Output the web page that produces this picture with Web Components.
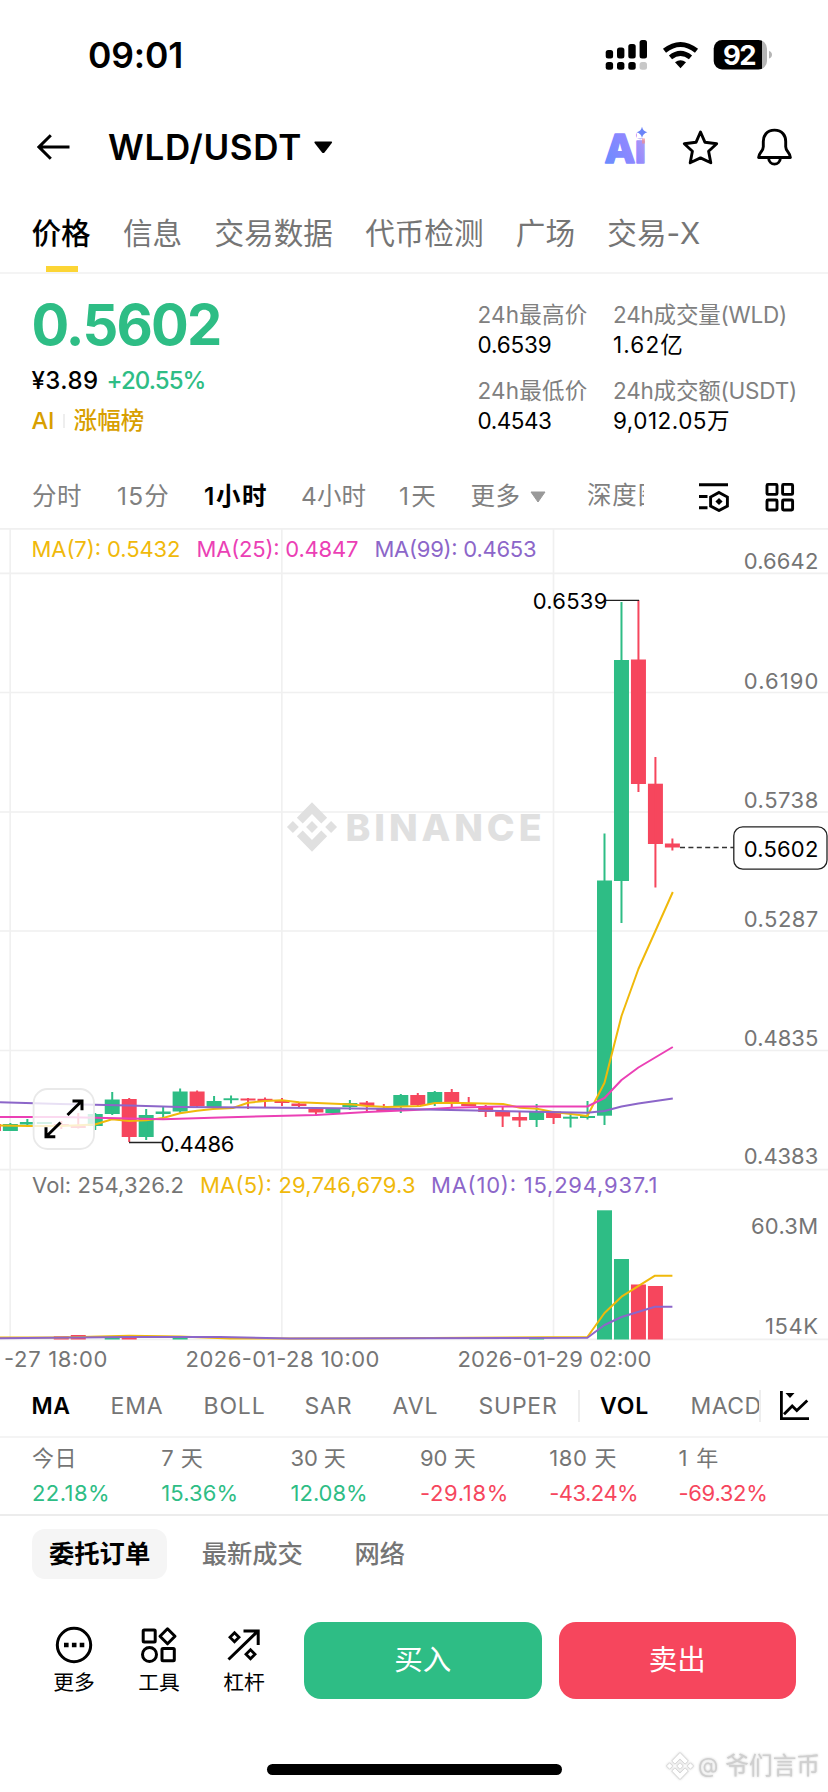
<!DOCTYPE html>
<html lang="zh">
<head>
<meta charset="utf-8">
<title>WLD/USDT</title>
<style>
  body {
    margin: 0;
    background: #fff;
    color: #000;
    font-family: Inter, "Noto Sans CJK SC", sans-serif;
  }
</style>
</head>
<body>
<trade-page></trade-page>

<script>
const GREEN = '#2ebd85';
const RED = '#f6465d';

// Text that is tracked to fill the width given in its w attribute
class FitText extends HTMLElement {
  connectedCallback() {
    this.attachShadow({ mode: 'open' });
    this.shadowRoot.innerHTML = `
      <style>
        :host { display: block; white-space: nowrap; }
        span { display: inline-block; }
      </style>
      <span><slot></slot></span>
    `;
    const w = parseFloat(this.getAttribute('w'));
    if (!w) return;
    const span = this.shadowRoot.querySelector('span');
    const natural = span.getBoundingClientRect().width;
    span.style.letterSpacing = (w - natural) / this.textContent.length + 'px';
    this.style.width = w + 'px';
  }
}

class StatusBar extends HTMLElement {
  connectedCallback() {
    this.attachShadow({ mode: 'open' });
    this.shadowRoot.innerHTML = `
      <style>
        :host {
          display: flex;
          align-items: center;
          justify-content: space-between;
          height: 110px;
          padding: 0 56px 0 88px;
          box-sizing: border-box;
        }
        fit-text { font-size: 35.5px; font-weight: 600; }
        svg { display: block; }
      </style>
      <fit-text w="95">09:01</fit-text>
      <svg width="167" height="32" viewBox="605 39 167 32">
        <g>
          <rect x="605.7" y="50" width="7.4" height="8.4" rx="2.5"/>
          <rect x="617" y="47.5" width="7.4" height="10.9" rx="2.5"/>
          <rect x="628.3" y="44" width="7.4" height="14.4" rx="2.5"/>
          <rect x="639.6" y="40" width="7.4" height="18.4" rx="2.5"/>
          <rect x="605.7" y="62" width="7.4" height="7.8" rx="2.5"/>
          <rect x="617" y="62" width="7.4" height="7.8" rx="2.5"/>
          <rect x="628.3" y="62" width="7.4" height="7.8" rx="2.5"/>
          <rect x="639.6" y="62" width="7.4" height="7.8" rx="2.5" fill="#c8c8c8"/>
        </g>
        <g fill="none" stroke="#000" stroke-width="5">
          <path d="M664.5 50.8 Q680.5 38.2 696.5 50.8"/>
          <path d="M670.5 57.4 Q680.5 49.4 690.5 57.4"/>
        </g>
        <path d="M675 62.3 Q680.5 58 686 62.3 L680.5 68.2 Z"/>
        <clipPath id="b"><rect x="713.7" y="40" width="53.3" height="29.6" rx="8.5"/></clipPath>
        <g clip-path="url(#b)">
          <rect x="713" y="39" width="49.3" height="32"/>
          <rect x="762.3" y="39" width="6" height="32" fill="#b5b5b5"/>
        </g>
        <path d="M769 51 Q772 52 772 54.8 T769 58.6 Z" fill="#b5b5b5"/>
        <text x="723" y="64.9" font-size="27.5" font-weight="700" fill="#fff" textLength="33.5">92</text>
      </svg>
    `;
  }
}

class PairHeader extends HTMLElement {
  connectedCallback() {
    this.attachShadow({ mode: 'open' });
    this.shadowRoot.innerHTML = `
      <style>
        :host {
          display: grid;
          grid-template-columns: 71px 205px 1fr auto;
          align-items: center;
          height: 73px;
          padding: 0 34px 0 37px;
        }
        fit-text { font-size: 35px; font-weight: 600; }
        svg { display: block; }
      </style>
      <svg width="33" height="28" fill="none" stroke="#000" stroke-width="3">
        <path d="M32.5 14 H2.5 M13.8 2.3 L2 14 L13.8 25.7"/>
      </svg>
      <fit-text w="194">${this.getAttribute('pair')}</fit-text>
      <svg width="20" height="14"><path d="M2 1.5 H18.5 Q19.6 1.8 18.8 3 L11.5 12.5 Q10.2 13.6 9 12.5 L1.6 3 Q1 1.8 2 1.5 Z"/></svg>
      <svg width="190" height="44" viewBox="604 124.5 190 44">
        <defs>
          <linearGradient id="g" gradientUnits="userSpaceOnUse" x1="605" y1="160" x2="648" y2="140">
            <stop offset="0" stop-color="#6b8cff"/>
            <stop offset=".6" stop-color="#9087ff"/>
            <stop offset="1" stop-color="#b49df2"/>
          </linearGradient>
          <clipPath id="c"><rect x="600" y="131" width="37" height="40"/><rect x="637" y="138" width="14" height="30"/></clipPath>
        </defs>
        <g clip-path="url(#c)">
          <text x="604.5" y="162.5" font-size="40" font-weight="800" fill="url(#g)" stroke="url(#g)" stroke-width="1.5" stroke-linejoin="round" textLength="41.5">Ai</text>
        </g>
        <path d="M642 126.2 Q643 130.8 647.4 131.8 Q643 132.8 642 137.4 Q641 132.8 636.6 131.8 Q641 130.8 642 126.2 Z" fill="#6a84f8"/>
        <rect x="642" y="138" width="3" height="5" fill="#f08b93" opacity=".7"/>
        <g fill="none" stroke="#000" stroke-width="2.9" stroke-linejoin="round">
          <path d="M700.5 131.5 L705 141.8 L716.7 143.2 L708.6 150.7 L710.8 162.3 L700.5 157.4 L690.2 162.3 L692.4 150.7 L684.3 143.2 L696 141.8 Z"/>
          <path d="M774.5 129.6 C766.5 129.6 763.3 135.5 763.3 141 V146.2 C763.3 151 758.6 152.4 758.6 157 H790.4 C790.4 152.4 785.7 151 785.7 146.2 V141 C785.7 135.5 782.5 129.6 774.5 129.6 Z"/>
          <path d="M768.6 157.5 C769 165.6 780 165.6 780.4 157.5"/>
        </g>
      </svg>
    `;
  }
}

class PageTabs extends HTMLElement {
  connectedCallback() {
    this.attachShadow({ mode: 'open' });
    this.shadowRoot.innerHTML = `
      <style>
        :host {
          display: flex;
          gap: 32.3px;
          height: 91px;
          padding: 31px 0 0 31.5px;
          box-sizing: border-box;
          border-bottom: 2px solid #f4f4f4;
          font-size: 29.6px;
          line-height: 38px;
          color: #757575;
        }
        ::slotted(*) { white-space: nowrap; }
        ::slotted(.active) {
          color: #000;
          font-weight: 500;
          height: 53px;
          background: linear-gradient(#fcd535, #fcd535) 14px 100% / 32px 6px no-repeat;
          padding-bottom: 5px;
        }
      </style>
      <slot></slot>
    `;
  }
}

class PriceSummary extends HTMLElement {
  connectedCallback() {
    this.attachShadow({ mode: 'open' });
    this.shadowRoot.innerHTML = `
      <style>
        :host {
          display: grid;
          grid-template-columns: 446px 135.5px 1fr;
          height: 192px;
          padding-left: 31.5px;
          font-size: 22.5px;
        }
        .price { font-size: 56px; font-weight: 700; line-height: 60px; margin-top: 21px; color: ${GREEN}; }
        .change { display: flex; gap: 8px; font-size: 24px; font-weight: 500; line-height: 40px; margin-top: 6px; }
        .up { color: ${GREEN}; }
        .tags { display: flex; align-items: center; color: #d89f00; line-height: 40px; font-size: 23.5px; font-weight: 500; }
        i { width: 2px; height: 14px; background: #eee; margin: 0 9px 0 8px; }
        .stats { display: grid; grid-template-rows: 30px 46px 30px 30px; line-height: 30px; padding-top: 26px; }
        .label { color: #808080; }
      </style>
      <div>
        <fit-text class="price" w="189">0.5602</fit-text>
        <div class="change">
          <fit-text w="67">¥3.89</fit-text>
          <fit-text class="up" w="99">+20.55%</fit-text>
        </div>
        <div class="tags"><fit-text w="23">AI</fit-text><i></i><fit-text w="71">涨幅榜</fit-text></div>
      </div>
      <div class="stats">
        <fit-text class="label" w="110">24h最高价</fit-text>
        <fit-text w="74">0.6539</fit-text>
        <fit-text class="label" w="110">24h最低价</fit-text>
        <fit-text w="74">0.4543</fit-text>
      </div>
      <div class="stats">
        <fit-text class="label" w="174">24h成交量(WLD)</fit-text>
        <fit-text w="71">1.62亿</fit-text>
        <fit-text class="label" w="184">24h成交额(USDT)</fit-text>
        <fit-text w="117">9,012.05万</fit-text>
      </div>
    `;
  }
}

class IntervalBar extends HTMLElement {
  connectedCallback() {
    this.attachShadow({ mode: 'open' });
    this.shadowRoot.innerHTML = `
      <style>
        :host {
          display: grid;
          grid-template-columns: 85px 87px 97px 98px 71.5px 59.5px 57px 57px 54px 67px 1fr;
          align-items: center;
          height: 62px;
          padding-left: 32px;
          font-size: 24.5px;
          line-height: 30px;
          color: #808080;
        }
        fit-text { margin-top: -2px; }
        .on { color: #000; font-weight: 600; }
        .cut { overflow: hidden; height: 34px; padding-top: 2px; box-sizing: border-box; }
        svg { display: block; }
      </style>
      <fit-text w="50">分时</fit-text>
      <fit-text w="53">15分</fit-text>
      <fit-text class="on" w="64">1小时</fit-text>
      <fit-text w="65">4小时</fit-text>
      <fit-text w="39">1天</fit-text>
      <fit-text w="50">更多</fit-text>
      <svg width="16" height="12"><path d="M1 1 H15 L8 11 Z" fill="#999" stroke="#999" stroke-linejoin="round"/></svg>
      <div class="cut"><fit-text w="76">深度图</fit-text></div>
      <i></i>
      <svg width="31" height="30" viewBox="698 482.5 31 30" fill="none" stroke="#000" stroke-width="2.9">
        <path d="M699 485.3 H728 M699 497 H707.5 M699 508.3 H707.5"/>
        <path d="M719 493 L727.4 497.6 V506.6 L719 511 L710.6 506.6 V497.6 Z"/>
        <path d="M719 498.6 L722.6 502.1 L719 505.6 L715.4 502.1 Z" fill="#000" stroke="none"/>
      </svg>
      <svg width="30" height="30" fill="none" stroke="#000" stroke-width="2.9">
        <rect x="2" y="2.4" width="10" height="10" rx="1"/>
        <rect x="17.6" y="2.4" width="10" height="10" rx="1"/>
        <rect x="2" y="18" width="10" height="10" rx="1"/>
        <rect x="17.6" y="18" width="10" height="10" rx="1"/>
      </svg>
    `;
  }
}

// newest first: [up, body top, body bottom, wick top, wick bottom] in chart y
const CANDLES = [
  [0, 843.5, 847.5, 838.5, 850.5], [0, 783.7, 844, 757, 887.5], [0, 659.5, 784, 600, 792],
  [1, 660, 881, 602, 923], [1, 880.5, 1115.7, 833.5, 1125], [1, 1116, 1118, 1101, 1119.5],
  [1, 1116.7, 1118.7, 1112, 1127.5], [0, 1111.5, 1118, 1111, 1124], [1, 1112, 1120, 1104, 1127],
  [0, 1117, 1120.5, 1112, 1127], [0, 1111.5, 1116.5, 1107, 1127], [0, 1106, 1112, 1105, 1117],
  [0, 1104, 1106, 1097, 1106], [0, 1092, 1103, 1089, 1108], [1, 1092, 1104, 1091, 1106],
  [0, 1095, 1105, 1093, 1106], [1, 1095, 1106, 1094, 1113], [0, 1109, 1112, 1104, 1112],
  [0, 1102.5, 1106, 1101, 1111], [1, 1103, 1107, 1100, 1110], [1, 1109, 1113, 1108, 1114.5],
  [0, 1109, 1112.5, 1107, 1116], [0, 1103.5, 1106, 1103, 1107.5], [0, 1100.5, 1103, 1098, 1106],
  [0, 1098.8, 1101, 1097.5, 1107], [0, 1098.5, 1100.5, 1098, 1109], [1, 1098.3, 1100.2, 1095.5, 1103.5],
  [1, 1101, 1107, 1096, 1107], [0, 1091.5, 1106, 1090.5, 1107], [1, 1091.5, 1111.5, 1088.5, 1113],
  [1, 1111.5, 1114, 1107, 1118], [1, 1115, 1137, 1109, 1140], [0, 1099, 1137, 1098, 1142],
  [1, 1099.5, 1114, 1092, 1115], [1, 1114, 1126, 1113, 1130], [0, 1126, 1128, 1113, 1128.5],
  [0, 1124, 1126, 1121, 1129], [1, 1122, 1124, 1122, 1124], [1, 1122, 1124.5, 1119, 1127],
  [1, 1124, 1131, 1123, 1131], [0, 1124, 1131, 1124, 1131]
];

// [candle index, top]
const VOLUMES = [[1, 1286], [2, 1284.5], [3, 1259], [4, 1210.3], [8, 1338], [29, 1337.5], [32, 1337], [33, 1337.5], [35, 1335], [36, 1336.3]];

const LINES = {
  ma7: ['#f0b90b', '0,1125.5 30,1126 61,1126 95,1124.5 112,1119.3 129,1121 146.5,1120.3 163,1118 180,1113.3 197,1110.7 213,1109 233,1108 248,1102.7 265,1101 282,1100.3 299,1102.3 353,1104.5 367,1106 387,1107 420,1106 435,1103 452,1102.7 503,1104 520,1107.7 537,1108.7 553,1112 571,1114 587.4,1116 604.5,1082.7 621.5,1016 638.4,969 655.4,931 672.8,892'],
  ma25: ['#eb40b5', '0,1117 61,1117 129,1118.5 163,1119.3 220,1117.5 316,1115 367,1112 414,1110 452,1107.7 500,1106.5 587.4,1106.5 604.5,1098 621.5,1080 638.4,1067.5 672.8,1047'],
  ma99: ['#8c66c9', '0,1102.3 60,1104 129,1105.5 180,1107 316,1108 414,1109.3 500,1111 587,1112.8 604.5,1111 621.5,1106.5 638.4,1103.5 672.8,1098.5'],
  vol5: ['#f0b90b', '0,1337.5 61,1337.5 129,1335.8 180,1336.5 230,1338.5 350,1338.5 587.4,1337 604.5,1313 621.5,1296.7 655,1275.7 672.4,1275.7'],
  vol10: ['#8c66c9', '0,1338.2 129,1337 220,1337 290,1338.5 587.4,1337.8 604.5,1325 621.5,1317 655,1306.7 672.4,1306.7']
};

class KlineChart extends HTMLElement {
  x(k) {
    return 672.4 - 16.975 * k;
  }

  // cy is the middle of the digits
  label(x, cy, w, color, text) {
    return `<text x="${x}" y="${cy + 7.8}" fill="${color}" textLength="${w}">${text}</text>`;
  }

  connectedCallback() {
    this.attachShadow({ mode: 'open' });

    const grid = [573.3, 692.5, 812, 931, 1050.5, 1169.7, 1339.3].map(y => `M0 ${y} H828`).join(' ')
      + [10.2, 281.8, 553.5].map(x => `M${x} 528 V1339`).join(' ');

    const candles = CANDLES.map(([up, top, bottom, high, low], k) => {
      const x = this.x(k);
      const color = up ? GREEN : RED;
      return `<rect x="${x - 7.5}" y="${top}" width="15" height="${bottom - top}" fill="${color}"/>
        <rect x="${x - 1}" y="${high}" width="2" height="${low - high}" fill="${color}"/>`;
    }).join('');

    const volumes = VOLUMES.map(([k, top]) =>
      `<rect x="${this.x(k) - 7.5}" y="${top}" width="15" height="${1339.5 - top}" fill="${CANDLES[k][0] ? GREEN : RED}"/>`
    ).join('');

    const lines = Object.values(LINES).map(([color, points]) =>
      `<polyline points="${points}" fill="none" stroke="${color}" stroke-width="2" stroke-linejoin="round"/>`
    ).join('');

    const axis = [['0.6642', 561], ['0.6190', 681], ['0.5738', 800], ['0.5287', 919], ['0.4835', 1038], ['0.4383', 1156]]
      .map(([t, y]) => this.label(743.8, y, 74.5, '#757575', t)).join('');

    this.shadowRoot.innerHTML = `
      <style>
        :host { display: block; height: 852px; }
        svg { display: block; font-size: 22px; }
      </style>
      <svg width="828" height="852" viewBox="0 528 828 852">
        <path d="${grid} M0 528.8 H828" stroke="#f0f0f0" stroke-width="1.7" fill="none"/>
        <g fill="#e0e0e0">
          <g transform="translate(312 827) scale(1.97)">
            <path d="M-7.7 -4.7 L0 -12.6 L7.7 -4.7 L4.7 -1.8 L0 -6.6 L-4.7 -1.8 Z"/>
            <path d="M-7.7 4.7 L0 12.6 L7.7 4.7 L4.7 1.8 L0 6.6 L-4.7 1.8 Z"/>
            <path d="M0 -3 L3 0 L0 3 L-3 0 Z M-9.7 -3 L-6.7 0 L-9.7 3 L-12.7 0 Z M9.7 -3 L12.7 0 L9.7 3 L6.7 0 Z"/>
          </g>
          <text x="345.5" y="840.8" font-size="37.5" font-weight="800" textLength="196">BINANCE</text>
        </g>
        ${candles}
        ${volumes}
        ${lines}
        ${axis}
        ${this.label(751, 1226, 67, '#757575', '60.3M')}
        ${this.label(765, 1326, 53, '#757575', '154K')}
        ${this.label(31.5, 549, 149, '#f0b90b', 'MA(7): 0.5432')}
        ${this.label(196.5, 549, 162, '#eb40b5', 'MA(25): 0.4847')}
        ${this.label(374.5, 549, 162, '#8c66c9', 'MA(99): 0.4653')}
        ${this.label(32, 1185.5, 152, '#757575', 'Vol: 254,326.2')}
        ${this.label(200, 1185.5, 215.5, '#f0b90b', 'MA(5): 29,746,679.3')}
        ${this.label(431, 1185.5, 226.5, '#8c66c9', 'MA(10): 15,294,937.1')}
        ${this.label(4, 1359.5, 103.5, '#757575', '-27 18:00')}
        ${this.label(185.5, 1359.5, 194, '#757575', '2026-01-28 10:00')}
        ${this.label(457.5, 1359.5, 194, '#757575', '2026-01-29 02:00')}
        <path d="M606 600.4 H639 M129 1142.5 H162" stroke="#222" stroke-width="1.4"/>
        ${this.label(532.8, 601, 74.5, '#000', '0.6539')}
        ${this.label(160.5, 1144, 74, '#000', '0.4486')}
        <path d="M680 847.6 H734" stroke="#333" stroke-width="1.5" stroke-dasharray="5 3.4"/>
        <rect x="733.8" y="826.8" width="93.2" height="42.4" rx="9" fill="#fff" stroke="#222" stroke-width="1.3"/>
        ${this.label(743.8, 848.7, 74.5, '#000', '0.5602')}
        <rect x="33.6" y="1089" width="60.4" height="60" rx="14" fill="#fff" fill-opacity=".8" stroke="#e9e9e9" stroke-width="1.8"/>
        <path d="M67.5 1115 L82 1100.8 M72.5 1101 H82 V1110.3 M60.5 1122.5 L46 1136.7 M46 1127.3 V1136.7 H55.3" fill="none" stroke="#000" stroke-width="3"/>
      </svg>
    `;
  }
}

class IndicatorBar extends HTMLElement {
  connectedCallback() {
    this.attachShadow({ mode: 'open' });
    this.shadowRoot.innerHTML = `
      <style>
        :host {
          display: grid;
          grid-template-columns: 79px 93px 101px 88px 86px 99px 22.5px 90.5px 68px 20px 1fr;
          align-items: center;
          height: 58px;
          padding: 0 0 5px 31.5px;
          box-sizing: border-box;
          border-bottom: 2px solid #f4f4f4;
          font-size: 23px;
          color: #757575;
        }
        .on { color: #000; font-weight: 600; }
        .cut { overflow: hidden; }
        i { width: 2px; height: 32px; background: #eee; }
        svg { display: block; }
      </style>
      <fit-text class="on" w="39">MA</fit-text>
      <fit-text w="53">EMA</fit-text>
      <fit-text w="62">BOLL</fit-text>
      <fit-text w="48">SAR</fit-text>
      <fit-text w="46">AVL</fit-text>
      <fit-text w="79">SUPER</fit-text>
      <i></i>
      <fit-text class="on" w="49">VOL</fit-text>
      <div class="cut"><fit-text w="71">MACD</fit-text></div>
      <i></i>
      <svg width="31" height="32" fill="none" stroke="#000" stroke-width="2.8">
        <path d="M2.4 1 V28.6 H30"/>
        <path d="M5 24.3 L13.2 16 L17.8 20.5 L28.3 10.5"/>
        <path d="M6.5 3 H15.5 L11 8 Z" fill="#000" stroke="none"/>
      </svg>
    `;
  }
}

class PeriodReturns extends HTMLElement {
  connectedCallback() {
    const items = [
      ['今日', 45, '22.18%', 78], ['7 天', 42, '15.36%', 77], ['30 天', 55, '12.08%', 77],
      ['90 天', 56, '-29.18%', 89], ['180 天', 68, '-43.24%', 89], ['1 年', 41, '-69.32%', 89]
    ];
    this.attachShadow({ mode: 'open' });
    this.shadowRoot.innerHTML = `
      <style>
        :host {
          display: grid;
          grid-template-columns: repeat(6, 129.3px);
          height: 78px;
          padding: 3px 0 0 32px;
          box-sizing: border-box;
          border-bottom: 2px solid #ececec;
          font-size: 22px;
          line-height: 35px;
        }
        .label { color: #757575; }
      </style>
      ${items.map(([label, lw, value, vw]) => `
        <div>
          <fit-text class="label" w="${lw}">${label}</fit-text>
          <fit-text w="${vw}" style="color: ${value[0] === '-' ? RED : GREEN}">${value}</fit-text>
        </div>
      `).join('')}
    `;
  }
}

class OrderTabs extends HTMLElement {
  connectedCallback() {
    this.attachShadow({ mode: 'open' });
    this.shadowRoot.innerHTML = `
      <style>
        :host {
          display: flex;
          gap: 17.5px;
          height: 93px;
          padding: 13px 32px 0;
          box-sizing: border-box;
          font-size: 25.3px;
          line-height: 50px;
          font-weight: 500;
          color: #757575;
        }
        ::slotted(*) { height: 50px; padding: 0 17px; border-radius: 13px; }
        ::slotted(.active) { background: #f5f5f5; color: #000; font-weight: 600; }
      </style>
      <slot></slot>
    `;
  }
}

class TradeFooter extends HTMLElement {
  connectedCallback() {
    this.attachShadow({ mode: 'open' });
    this.shadowRoot.innerHTML = `
      <style>
        :host {
          display: grid;
          grid-template-columns: 85px 85px 102px 237.5px 237.5px;
          column-gap: 0;
          height: 77px;
          padding: 13px 32px 79px;
        }
        .tool { width: 84px; text-align: center; font-size: 20.8px; line-height: 30px; padding-top: 4px; }
        .tool svg { display: block; margin: 0 auto 4px; }
        .btn { height: 77px; line-height: 76px; border-radius: 17px; color: #fff; font-size: 28.5px; text-align: center; }
        .buy { background: ${GREEN}; }
        .sell { background: ${RED}; margin: 0 -17px 0 17px; }
      </style>
      <div class="tool">
        <svg width="38" height="38" fill="none" stroke="#000" stroke-width="3">
          <circle cx="19" cy="19" r="16.7"/>
          <path d="M9 19 h4.6 M16.9 19 h4.6 M24.7 19 h4.6" stroke-width="4.4"/>
        </svg>
        更多
      </div>
      <div class="tool">
        <svg width="38" height="38" fill="none" stroke="#000" stroke-width="3">
          <rect x="3.2" y="4" width="12" height="12" rx="1"/>
          <path d="M27.5 2.8 L35 10.3 L27.5 17.8 L20 10.3 Z" stroke-linejoin="round"/>
          <circle cx="9.5" cy="28.5" r="7"/>
          <rect x="22" y="22.5" width="12.3" height="12.3" rx="1"/>
        </svg>
        工具
      </div>
      <div class="tool">
        <svg width="38" height="38" fill="none" stroke="#000" stroke-width="3">
          <path d="M3.5 33.5 L32.5 5.5 M18.5 5 H33.2 V19"/>
          <path d="M9.5 6.8 L14 11.3 L9.5 15.8 L5 11.3 Z M25.5 23.8 L30 28.3 L25.5 32.8 L21 28.3 Z" stroke-width="2.8"/>
        </svg>
        杠杆
      </div>
      <div class="btn buy">买入</div>
      <div class="btn sell">卖出</div>
    `;
  }
}

class HomeIndicator extends HTMLElement {
  connectedCallback() {
    this.attachShadow({ mode: 'open' });
    this.shadowRoot.innerHTML = `
      <style>
        :host {
          display: grid;
          grid-template-columns: 267px 295px 104px 1fr;
          height: 14px;
        }
        b { grid-column: 2; height: 11px; margin-top: -14px; border-radius: 6px; background: #000; }
        div {
          grid-column: 4;
          display: flex;
          align-items: center;
          height: 30px;
          margin-top: -27px;
          color: #cfcfcf;
          font-size: 23.7px;
          line-height: 30px;
          white-space: nowrap;
          filter: drop-shadow(0 0 1px #ccc);
        }
        svg { display: block; margin-right: 4px; }
        span { font-size: 21px; margin-right: 7px; }
      </style>
      <b></b>
      <div>
        <svg width="28" height="30" viewBox="-13 -14 26 28" fill="#fff" stroke="#cfcfcf" stroke-width=".7">
          <path d="M-7.7 -4.7 L0 -12.6 L7.7 -4.7 L4.7 -1.8 L0 -6.6 L-4.7 -1.8 Z"/>
          <path d="M-7.7 4.7 L0 12.6 L7.7 4.7 L4.7 1.8 L0 6.6 L-4.7 1.8 Z"/>
          <path d="M0 -3 L3 0 L0 3 L-3 0 Z M-9.7 -3 L-6.7 0 L-9.7 3 L-12.7 0 Z M9.7 -3 L12.7 0 L9.7 3 L6.7 0 Z"/>
        </svg>
        <span>@</span>爷们言币
      </div>
    `;
  }
}

class TradePage extends HTMLElement {
  connectedCallback() {
    this.attachShadow({ mode: 'open' });
    this.shadowRoot.innerHTML = `
      <style>
        :host { display: block; width: 828px; height: 1792px; overflow: hidden; }
      </style>
      <status-bar></status-bar>
      <pair-header pair="WLD/USDT"></pair-header>
      <page-tabs>
        <span class="active">价格</span>
        <span>信息</span>
        <span>交易数据</span>
        <span>代币检测</span>
        <span>广场</span>
        <span>交易-X</span>
      </page-tabs>
      <price-summary></price-summary>
      <interval-bar></interval-bar>
      <kline-chart></kline-chart>
      <indicator-bar></indicator-bar>
      <period-returns></period-returns>
      <order-tabs>
        <span class="active">委托订单</span>
        <span>最新成交</span>
        <span>网络</span>
      </order-tabs>
      <trade-footer></trade-footer>
      <home-indicator></home-indicator>
    `;
  }
}

customElements.define('fit-text', FitText);
customElements.define('status-bar', StatusBar);
customElements.define('pair-header', PairHeader);
customElements.define('page-tabs', PageTabs);
customElements.define('price-summary', PriceSummary);
customElements.define('interval-bar', IntervalBar);
customElements.define('kline-chart', KlineChart);
customElements.define('indicator-bar', IndicatorBar);
customElements.define('period-returns', PeriodReturns);
customElements.define('order-tabs', OrderTabs);
customElements.define('trade-footer', TradeFooter);
customElements.define('home-indicator', HomeIndicator);
customElements.define('trade-page', TradePage);
</script>
</body>
</html>
